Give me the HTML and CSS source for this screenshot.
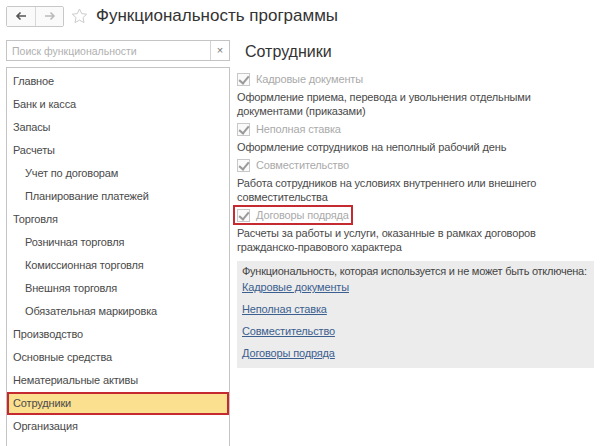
FILE: index.html
```html
<!DOCTYPE html>
<html lang="ru">

<head>
    <meta charset="UTF-8">
    <meta name="viewport" content="width=device-width, initial-scale=1.0">
    <title>Функциональность программы</title>
    <link rel="stylesheet" href="styles.css">
</head>

<body>
    <div class="topbar">
        <div class="nav">
            <button class="nav-btn">
                <svg width="12" height="10" viewBox="0 0 12 10"><path d="M11 5H2M5.5 1.5L2 5l3.5 3.5" stroke="#555" stroke-width="1.6" fill="none"/></svg>
            </button>
            <button class="nav-btn">
                <svg width="12" height="10" viewBox="0 0 12 10"><path d="M1 5h9M6.5 1.5L10 5 6.5 8.5" stroke="#bbb" stroke-width="1.6" fill="none"/></svg>
            </button>
        </div>
        <svg class="star" width="17" height="16" viewBox="0 0 17 16"><path d="M8.5 1l2.2 4.6 5 .6-3.7 3.4 1 5-4.5-2.5L4 14.6l1-5L1.3 6.2l5-.6z" fill="none" stroke="#ccc" stroke-width="1"/></svg>
        <h1>Функциональность программы</h1>
    </div>

    <div class="main">
        <div class="sidebar">
            <div class="search">
                <input type="text" placeholder="Поиск функциональности">
                <span class="clear">×</span>
            </div>
            <ul class="sections">
                <li>Главное</li>
                <li>Банк и касса</li>
                <li>Запасы</li>
                <li>Расчеты</li>
                <li class="sub">Учет по договорам</li>
                <li class="sub">Планирование платежей</li>
                <li>Торговля</li>
                <li class="sub">Розничная торговля</li>
                <li class="sub">Комиссионная торговля</li>
                <li class="sub">Внешняя торговля</li>
                <li class="sub">Обязательная маркировка</li>
                <li>Производство</li>
                <li>Основные средства</li>
                <li>Нематериальные активы</li>
                <li class="active">Сотрудники</li>
                <li>Организация</li>
            </ul>
        </div>

        <div class="content">
            <h2>Сотрудники</h2>

            <div class="option">
                <label class="check"><span class="box"></span>Кадровые документы</label>
                <p>Оформление приема, перевода и увольнения отдельными<br>документами (приказами)</p>
            </div>
            <div class="option">
                <label class="check"><span class="box"></span>Неполная ставка</label>
                <p>Оформление сотрудников на неполный рабочий день</p>
            </div>
            <div class="option">
                <label class="check"><span class="box"></span>Совместительство</label>
                <p>Работа сотрудников на условиях внутреннего или внешнего<br>совместительства</p>
            </div>
            <div class="option">
                <label class="check marked"><span class="box"></span>Договоры подряда</label>
                <p>Расчеты за работы и услуги, оказанные в рамках договоров<br>гражданско-правового характера</p>
            </div>

            <div class="locked">
                <div class="locked-title">Функциональность, которая используется и не может быть отключена:</div>
                <a href="#">Кадровые документы</a>
                <a href="#">Неполная ставка</a>
                <a href="#">Совместительство</a>
                <a href="#">Договоры подряда</a>
            </div>
        </div>
    </div>
</body>

</html>
```

FILE: styles.css
```css
body {
    margin: 0;
    height: 446px;
    background: white;
    font-family: "Liberation Sans", Arial, sans-serif;
    font-size: 11px;
    letter-spacing: -0.15px;
    color: #4a4a4a;
    overflow: hidden;
}

.topbar {
    display: flex;
    align-items: center;
    height: 22px;
    padding: 5px 0 0 6px;
}

.nav {
    display: flex;
    border: 1px solid #c8c8c8;
    border-radius: 2px;
    height: 19px;
}

.nav-btn {
    width: 28px;
    height: 19px;
    padding: 0;
    border: none;
    background: #fafafa;
    display: flex;
    align-items: center;
    justify-content: center;
}

.nav-btn + .nav-btn {
    border-left: 1px solid #d8d8d8;
}

.star {
    margin-left: 7px;
}

h1 {
    margin: 0 0 0 8px;
    font-size: 17px;
    letter-spacing: 0;
    font-weight: normal;
    color: #333;
}

.main {
    display: flex;
    margin-top: 13px;
}

.sidebar {
    width: 224px;
    margin-left: 6px;
}

.search {
    display: flex;
    height: 19px;
    border: 1px solid #c4c4c4;
}

.search input {
    flex: 1;
    min-width: 0;
    border: none;
    padding: 0 5px;
    font-family: inherit;
    font-size: 10.5px;
    outline: none;
}

.search input::placeholder {
    color: #b0b0b0;
}

.clear {
    width: 18px;
    border-left: 1px solid #d4d4d4;
    text-align: center;
    line-height: 19px;
    font-size: 11px;
    color: #777;
}

.sections {
    list-style: none;
    margin: 6px 0 0;
    padding: 2px 0 0;
    border: 1px solid #c4c4c4;
    border-bottom: none;
    height: 378px;
    overflow: hidden;
}

.sections li {
    height: 23px;
    line-height: 23px;
    padding-left: 6px;
    white-space: nowrap;
}

.sections li.sub {
    padding-left: 18px;
}

.sections li.active {
    background: #fbe08f;
    outline: 2px solid #c42a2f;
    outline-offset: -2px;
}

.content {
    flex: 1;
    padding-left: 7px;
}

h2 {
    margin: 0 0 5px 8px;
    font-size: 16px;
    line-height: 24px;
    letter-spacing: 0;
    font-weight: normal;
    color: #333;
}

.option {
    margin-bottom: 1px;
}

.check {
    display: flex;
    align-items: center;
    height: 20px;
    color: #aaa;
}

.check .box {
    position: relative;
    width: 11px;
    height: 11px;
    border: 1px solid #c8c8c8;
    margin-right: 6px;
    background: #fafafa;
}

.check .box::after {
    content: "";
    position: absolute;
    left: 3px;
    top: 0;
    width: 4px;
    height: 8px;
    border: solid #9a9a9a;
    border-width: 0 2px 2px 0;
    transform: rotate(40deg);
}

.check.marked {
    width: max-content;
    margin-left: -4px;
    padding: 0 4px 0 4px;
    outline: 2px solid #c42a2f;
    outline-offset: -2px;
}

.option p {
    margin: 1px 0 0;
    line-height: 14px;
}

.locked {
    margin-top: 7px;
    margin-right: 6px;
    padding: 3px 0 8px 5px;
    background: #ececec;
}

.locked-title {
    line-height: 14px;
    letter-spacing: -0.25px;
    color: #444;
}

.locked a {
    display: block;
    width: max-content;
    margin-top: 8px;
    line-height: 14px;
    color: #3b5f8f;
}

.locked .locked-title + a {
    margin-top: 2px;
}
```
